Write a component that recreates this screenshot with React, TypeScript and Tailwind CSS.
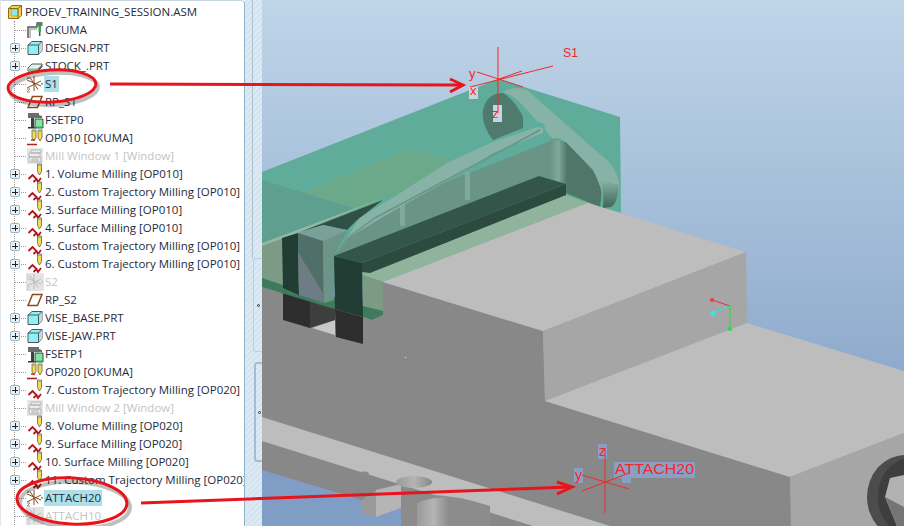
const font = "[font-family:'Open_Sans','Noto_Sans',sans-serif]";

function AsmIcon() {
  return (
    <svg width="16" height="16" viewBox="0 0 16 16">
      <path d="M1.5 4.5 5 1.5h9.5v10L11 14.5H1.5z" fill="#f3d34a" stroke="#8a6d10" />
      <path d="M4 5h7v7H4z" fill="#8fe6ee" stroke="#c9a92a" />
      <path d="M1.5 4.5H11v10M11 4.5l3.5-3" fill="none" stroke="#8a6d10" />
    </svg>
  );
}

function MachIcon() {
  return (
    <svg width="16" height="18" viewBox="0 0 16 18">
      <path d="M1 17V6h9V3h5" fill="none" stroke="#555" strokeWidth="1.5" />
      <path d="M3 17V8h7" fill="none" stroke="#aaa" strokeWidth="1.5" />
      <path d="M9.5 1h6v4h-6z" fill="#6b7a70" />
      <path d="M11.5 5h2.5v6h-2.5z" fill="#2ea84f" />
      <path d="M12.7 11v4" stroke="#1b6e33" strokeWidth="1.5" />
    </svg>
  );
}

function PartIcon() {
  return (
    <svg width="16" height="16" viewBox="0 0 16 16">
      <path d="M1 5 5 1.5h10v9L11.5 14.5H1z" fill="#8ff0f5" stroke="#4b5a60" />
      <path d="M11.5 5 15 1.5v9l-3.5 4z" fill="#c7d6d8" />
      <path d="M1 5h10.5v9.5M11.5 5 15 1.5" fill="none" stroke="#4b5a60" />
    </svg>
  );
}

function StockIcon() {
  return (
    <svg width="16" height="16" viewBox="0 0 16 16">
      <path d="M1 10 5 6h10v3l-4 4H1z" fill="#e9efe9" stroke="#555" />
      <path d="M1.5 10.5H11V13H1.5z" fill="#6fd08c" />
      <path d="m11 10.5 4-4V9l-4 4z" fill="#5c6660" />
    </svg>
  );
}

function CsysIcon({ faded = false }: { faded?: boolean }) {
  const c = faded ? "#bcbcbc" : "#8a4a1c";
  const g = faded ? "#cfcfcf" : "#8c8c8c";
  return (
    <svg width="18" height="18" viewBox="0 0 18 18" className={faded ? "bg-[#e4e4e4]" : ""}>
      <path d="M8 1v15M1 5l14 6M1 13l14-7M4 2.5l8 12" stroke={c} fill="none" />
      <path d="M1 1.5 3.5 4M3.5 1.5 1 4M1 14h3l-3 3h3M15 8l2 1.5M17 8l-2 1.5" stroke={g} fill="none" />
    </svg>
  );
}

function PlaneIcon() {
  return (
    <svg width="16" height="14" viewBox="0 0 16 14">
      <path d="M5.5 1.5H15L10.5 12.5H1z" fill="none" stroke="#8a4a1c" strokeWidth="1.5" />
    </svg>
  );
}

function FixtureIcon() {
  return (
    <svg width="17" height="18" viewBox="0 0 17 18">
      <path d="M1 2h11v2l3 1v2H1z" fill="#6d6d6d" />
      <path d="M4 7h3v10H4z" fill="#3f3f3f" />
      <path d="M1 16h8v1.5H1z" fill="#333" />
      <path d="M8 8h8v9H8z" fill="#5fd07f" stroke="#2f6b42" />
      <path d="M9 10h6M9 12h6M9 14h6" stroke="#bff0cd" />
    </svg>
  );
}

function Pencil({ x, y = 0 }: { x: number; y?: number }) {
  return (
    <g transform={`translate(${x} ${y})`}>
      <path d="M0 1h4v7.5L2 12 0 8.5z" fill="#f2dc57" stroke="#6d6230" strokeWidth="0.8" />
      <path d="M.5 1h3v2h-3z" fill="#aaa" />
    </g>
  );
}

function OpIcon() {
  return (
    <svg width="16" height="18" viewBox="0 0 16 18">
      <Pencil x={5} />
      <Pencil x={11} />
      <path d="M4 11h4" stroke="#b03434" strokeWidth="1.5" />
      <path d="M0 15.5h10" stroke="#a52222" strokeWidth="1.6" />
    </svg>
  );
}

function WindowIcon() {
  return (
    <svg width="16" height="16" viewBox="0 0 16 16">
      <path d="M0 0h16v16H0z" fill="#e7e7e7" />
      <path d="M4 2h10v3H4zM2 5h11v4H2zM2 9h12v5H2z" fill="#ececec" stroke="#b5b5b5" />
      <path d="M5 11h6v2H5z" fill="none" stroke="#b5b5b5" />
    </svg>
  );
}

function SeqIcon() {
  return (
    <svg width="16" height="18" viewBox="0 0 16 18" className="overflow-visible">
      <path d="M1.5 14 5.5 10l4 4-3 3M9.5 14l1.500 3 3-4" fill="none" stroke="#b01818" strokeWidth="1.8" />
      <Pencil x={10.5} y={-2} />
    </svg>
  );
}

type Row = {
  label: string;
  icon: React.ReactNode;
  plus?: boolean;
  dim?: boolean;
  hi?: boolean;
};

const seq = (label: string): Row => ({ label, icon: <SeqIcon />, plus: true });

const rows: Row[] = [
  { label: "OKUMA", icon: <MachIcon /> },
  { label: "DESIGN.PRT", icon: <PartIcon />, plus: true },
  { label: "STOCK_.PRT", icon: <StockIcon />, plus: true },
  { label: "S1", icon: <CsysIcon />, hi: true },
  { label: "RP_S1", icon: <PlaneIcon /> },
  { label: "FSETP0", icon: <FixtureIcon /> },
  { label: "OP010 [OKUMA]", icon: <OpIcon /> },
  { label: "Mill Window 1 [Window]", icon: <WindowIcon />, dim: true },
  seq("1. Volume Milling [OP010]"),
  seq("2. Custom Trajectory Milling [OP010]"),
  seq("3. Surface Milling [OP010]"),
  seq("4. Surface Milling [OP010]"),
  seq("5. Custom Trajectory Milling [OP010]"),
  seq("6. Custom Trajectory Milling [OP010]"),
  { label: "S2", icon: <CsysIcon faded />, dim: true },
  { label: "RP_S2", icon: <PlaneIcon /> },
  { label: "VISE_BASE.PRT", icon: <PartIcon />, plus: true },
  { label: "VISE-JAW.PRT", icon: <PartIcon />, plus: true },
  { label: "FSETP1", icon: <FixtureIcon /> },
  { label: "OP020 [OKUMA]", icon: <OpIcon /> },
  seq("7. Custom Trajectory Milling [OP020]"),
  { label: "Mill Window 2 [Window]", icon: <WindowIcon />, dim: true },
  seq("8. Volume Milling [OP020]"),
  seq("9. Surface Milling [OP020]"),
  seq("10. Surface Milling [OP020]"),
  seq("11. Custom Trajectory Milling [OP020]"),
  { label: "ATTACH20", icon: <CsysIcon />, hi: true },
  { label: "ATTACH10", icon: <CsysIcon faded />, dim: true },
];

function TreeRow({ row }: { row: Row }) {
  return (
    <div className="relative flex h-[18px] items-center whitespace-nowrap">
      <div className="w-[11px] shrink-0 border-t border-dotted border-[#9a9a9a]" />
      {row.plus && (
        <div className="absolute left-[-5px] top-[4px] flex h-[10px] w-[10px] items-center justify-center rounded-[2px] border border-[#9db4c4] bg-[#e8f1f7] text-[#222]">
          <div className="absolute h-[1px] w-[6px] bg-[#222]" />
          <div className="absolute h-[6px] w-[1px] bg-[#222]" />
        </div>
      )}
      <div className="flex w-[18px] shrink-0 items-center justify-center">{row.icon}</div>
      <span
        className={`px-[1px] text-[11.5px] leading-[16px] ${row.dim ? "text-[#c4c4c4]" : "text-[#1e2b3c]"} ${row.hi ? "bg-[#aee0ea]" : ""}`}
      >
        {row.label}
      </span>
    </div>
  );
}

function Scene() {
  return (
    <svg viewBox="262 0 642 526" className="h-[526px] w-[642px] shrink-0">
      <defs>
        <linearGradient id="sky" x1="0" y1="0" x2="0" y2="1">
          <stop offset="0" stopColor="#bfd5e8" />
          <stop offset="1" stopColor="#7b99c1" />
        </linearGradient>
        <linearGradient id="cyl" x1="0" y1="0" x2="1" y2="0">
          <stop offset="0" stopColor="#9a9a9a" />
          <stop offset="0.5" stopColor="#b4b4b4" />
          <stop offset="1" stopColor="#888" />
        </linearGradient>
        <linearGradient id="bend" x1="0" y1="0" x2="1" y2="0">
          <stop offset="0" stopColor="#6a9486" />
          <stop offset="0.5" stopColor="#7fa99b" />
          <stop offset="1" stopColor="#4f7669" />
        </linearGradient>
        <linearGradient id="tip" x1="0" y1="0" x2="0" y2="1">
          <stop offset="0" stopColor="#86b3a6" />
          <stop offset="1" stopColor="#3f6558" />
        </linearGradient>
      </defs>
      <rect x="262" y="0" width="642" height="526" fill="url(#sky)" />

      {/* stock */}
      <path d="M262 172 498 79 620 117 621 213 587 203 383 282 262 290z" fill="#5fac9a" />
      <path d="M262 209 412 148 470 165 300 232 282 238 262 244z" fill="#6ca98a" />
      <path d="M262 180 353 208 300 232 282 238 262 244z" fill="#5f9f90" />
      <path d="M262 243 282 238 283 287 262 278z" fill="#7d9a85" />
      <path d="M262 243 383 198 300 232 262 246z" fill="#93b8a2" />

      {/* hole and arm */}
      <path d="M493 140Q481 125 483 110 487 93 503 93 515 100 523 117L523 128z" fill="#4f7a6e" />
      <path d="M553 139 567 143 593 170 602 190 600 207 566 193V184z" fill="#4f7669" />
      <path d="M503 92Q515 85 527 90L610 163Q621 178 619 190 618 203 611 207L603 208Q604 190 593 170L567 143Q558 136 553 139L545 130Q546 123 538 122L525 108Q515 96 503 92z" fill="#86b3a6" />
      <path d="M603 208Q604 190 600 180L619 185Q618 203 611 207z" fill="url(#tip)" />
      <path d="M553 140 566 184 539 176 334 256 348 237 370 222 400 200 490 165z" fill="#6a9486" />
      <path d="M550 139 553 139 567 143V193L550 186z" fill="url(#bend)" />
      <path d="M400 200H405V226H400zM465 172H470V200H465z" fill="#7fa99b" />
      <path d="M300 232 383 200 357 220 347 230 323 225z" fill="#2f5044" />
      <path d="M350 233 360 218 400 193 447 163 490 143 537 127 543 128 543 133 493 153 467 170 400 207 373 223 348 238z" fill="#86b3a6" />
      <path d="M350 236 375 218 450 178 540 130" fill="none" stroke="#6a9486" strokeWidth="1.5" />

      {/* main gray faces of the vise */}
      <path d="M262 287 372 320 383 315 383 282 543 331 545 401 790 477 791 526H262z" fill="#888" />
      <path d="M312 328 335 320 335 335z" fill="#c8c8c8" />
      <path d="M283 293 310 300 310 328 283 320z" fill="#2e2e2e" />
      <path d="M310 300 335 302 335 320 310 328z" fill="#3e3e3e" />
      <path d="M335 309 363 317 363 344 336 337z" fill="#2e2e2e" />

      {/* green block */}
      <path d="M362 272 566 195 588 203 383 282 363 275z" fill="#8fb39b" />
      <path d="M363 275 383 282 383 315 372 320 363 317z" fill="#7d9a85" />
      <path d="M262 278 283 285 299 290 324 300 334 297 363 306 383 311 383 315 372 320 363 317 335 309 324 306 262 287z" fill="#3e7a5e" />

      {/* bar and blocks */}
      <path d="M334 256 539 176 566 184 362 263z" fill="#33554a" />
      <path d="M566 184V195L370 273 362 272V263z" fill="#2d4a40" />
      <path d="M334 256 362 263 363 317 335 309z" fill="#213c33" />
      <path d="M282 238 298 233 299 295 283 288z" fill="#213c33" />
      <path d="M298 233 323 225 347 230 323 241z" fill="#7aa099" />
      <path d="M298 233 323 241 324 303 299 295z" fill="#506f69" />
      <path d="M298 252 323 293 324 303 299 295z" fill="#6d7c85" />
      <path d="M323 241 348 230 334 256V300L324 303z" fill="#6c9487" />

      {/* jaw */}
      <path d="M383 282 588 203 746 252 543 331z" fill="#bdbdbd" />
      <path d="M543 331 746 252 747 323 545 401z" fill="#a6a6a6" />
      <path d="M545 401 747 323 904 371V433L790 477z" fill="#bdbdbd" />
      <path d="M790 477 904 433V526H791z" fill="#a6a6a6" />

      {/* ring, lower right */}
      <ellipse cx="905" cy="497" rx="38" ry="42" fill="#4c4c4c" />
      <ellipse cx="908" cy="497" rx="30" ry="38" fill="#3e3e3e" />
      <path d="M885 497 890 478 904 475V526H897z" fill="#b2b2b2" />
      <path d="M885 497 904 507V526H897z" fill="#757575" />

      {/* base strip */}
      <path d="M262 417 610 526H533L262 441z" fill="#bdbdbd" />
      <path d="M262 470 362 500V513L376 517 401 508V526H262z" fill="#7f9dc5" />
      <path d="M362 500 376 490V517L362 513z" fill="#9a9a9a" />
      <path d="M376 490 401 484V508L376 517z" fill="#b5b5b5" />
      <path d="M401 497Q440 490 490 506V526H401z" fill="#8c8c8c" />
      <path d="M417 503Q430 497 450 498V526H417z" fill="url(#cyl)" />
      <path d="M359 472Q372 470 368 477 362 484 360 482 366 478 359 472z" fill="#8a8a8a" />
      <ellipse cx="414" cy="482" rx="18" ry="6" fill="url(#cyl)" />

      <rect x="405" y="357" width="1" height="1" fill="#e8e8e8" />

      {/* triads */}
      <rect x="469" y="87" width="9" height="12" fill="#c8d4e2" />
      <rect x="493" y="105" width="9" height="17" fill="#c8d4e4" />
      <path d="M498 47V113M470 87 553 66M477 72 523 87M499 79 522 71" stroke="#f0282d" fill="none" />
      <g fill="#f0282d" fontFamily="'Liberation Sans',sans-serif" fontSize="13">
        <text x="563" y="57" textLength="15" lengthAdjust="spacingAndGlyphs">S1</text>
        <text x="469" y="78">y</text>
        <text x="470" y="95">x</text>
        <text x="492" y="118">z</text>
      </g>

      <g fill="#8a9fc3">
        <rect x="574" y="468" width="9" height="15" />
        <rect x="598" y="444" width="9" height="15" />
        <rect x="614" y="462" width="81" height="16" />
        <rect x="622" y="477" width="9" height="6" />
      </g>
      <path d="M605 448V513M582 475 629 489M582 491 629 473" stroke="#f0282d" fill="none" />
      <g fill="#f0282d" fontFamily="'Liberation Sans',sans-serif" fontSize="14">
        <text x="575" y="480">y</text>
        <text x="599" y="456">z</text>
        <text x="615" y="474" textLength="79" lengthAdjust="spacingAndGlyphs">ATTACH20</text>
      </g>

      <path d="M730 306 712 300" stroke="#ee3030" />
      <path d="M730 306 713 313" stroke="#30e0e0" />
      <path d="M730 306V329" stroke="#22e034" />
      <circle cx="712" cy="300" r="2" fill="#ee3a3a" />
      <circle cx="713" cy="313" r="2.5" fill="#30e8e8" />
      <circle cx="730" cy="329" r="2" fill="#22e034" />
    </svg>
  );
}

export default function App() {
  return (
    <div className={`relative flex h-[526px] w-[904px] overflow-hidden bg-white ${font}`}>
      <div className="w-[245px] shrink-0 overflow-hidden rounded-tr-[4px] border-r border-t border-l border-[#8fb2c9] border-l-[#dfe6ec] border-t-[#c8d6e0]">
        <div className="flex h-[20px] items-center whitespace-nowrap pl-[6px] pt-[1px] text-[11.5px] text-[#1e2b3c]">
          <AsmIcon />
          <span className="ml-[2px]">PROEV_TRAINING_SESSION.ASM</span>
        </div>
        <div className="ml-[13px] border-l border-dotted border-[#9a9a9a]">
          {rows.map((row) => (
            <TreeRow key={row.label} row={row} />
          ))}
        </div>
      </div>

      <div className="flex w-[17px] shrink-0 flex-col items-end bg-[repeating-linear-gradient(135deg,#d3e3ef_0,#d3e3ef_2px,#deeaf3_2px,#deeaf3_4px)]">
        <div className="h-[258px] w-[10px] border-l border-[#aebfcd]" />
        <div className="flex h-[94px] w-[9px] items-center justify-center rounded-l-[3px] border border-r-0 border-[#b9cfdf]">
          <div className="h-[3px] w-[3px] rounded-full border border-[#333]" />
        </div>
        <div className="mt-[10px] flex h-[100px] w-[8px] items-center justify-center rounded-l-[3px] border-2 border-r-0 border-[#a3bccf]">
          <div className="h-[3px] w-[3px] rounded-full border border-[#333]" />
        </div>
      </div>

      <Scene />

      {/* annotation arrows and rings drawn over the screen */}
      <svg viewBox="0 0 904 526" className="pointer-events-none absolute inset-0 h-[526px] w-[904px]">
        <g fill="none" stroke="#000" strokeOpacity="0.25" strokeWidth="4">
          <ellipse cx="54" cy="89" rx="44" ry="16" transform="rotate(-3 54 89)" />
          <ellipse cx="75" cy="505" rx="55" ry="23" transform="rotate(3 75 505)" />
        </g>
        <g fill="none" stroke="#e8141c" strokeWidth="3">
          <ellipse cx="52" cy="86" rx="44" ry="16" transform="rotate(-3 52 86)" />
          <ellipse cx="72" cy="501" rx="55" ry="23" transform="rotate(3 72 501)" />
          <path d="M110 84 462 85" />
          <path d="M450 79 463 85 450 92" />
          <path d="M141 503 571 487" />
          <path d="M557 482 572 487 557 494" />
        </g>
      </svg>
    </div>
  );
}
